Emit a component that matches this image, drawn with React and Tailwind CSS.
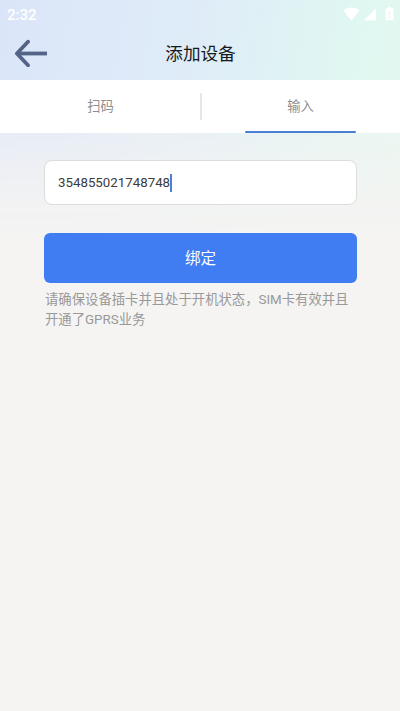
import { useState } from 'react';

const tabs = [
  { id: 'scan', label: '扫码' },
  { id: 'input', label: '输入' },
];

const StatusBar = () => (
  <div className="flex h-7 items-center justify-between pl-[7px] pr-[6px] text-white">
    <span className="pt-px text-[15px] font-medium leading-[26px]">2:32</span>
    <svg width="52" height="16" viewBox="0 0 52 16" fill="currentColor" className="mb-px">
      {/* wifi */}
      <path d="M1.2 4.6C5.8 .6 13 .6 17.6 4.6L9.4 14.4Z" />
      {/* signal */}
      <path d="M34 2.5v12H21.5Z" />
      {/* battery */}
      <path
        fillRule="evenodd"
        d="M43.5 3.2q0-.9.9-.9h1.4V1h3.4v1.3h1.4q.9 0 .9.9v10.2q0 .9-.9.9h-6.2q-.9 0-.9-.9ZM46.8 5.6v3.8h1.4V5.6ZM46.8 10.6v1.3h1.4v-1.3Z"
      />
    </svg>
  </div>
);

const Header = ({ title }) => (
  <div className="grid h-[52px] grid-cols-[48px_1fr_48px] items-center">
    <button className="pb-0.5 pl-[14px]" aria-label="返回">
      <svg width="34" height="28" viewBox="0 0 34 28" fill="none" stroke="#536488" strokeWidth="3.8">
        <path d="M33 14.5H3" />
        <path d="M14 2.7L2.9 14.5l11.1 11.8" strokeLinejoin="round" strokeLinecap="round" />
      </svg>
    </button>
    <h1 className="pl-px text-center text-[17.6px] text-[#15191d]">{title}</h1>
  </div>
);

const App = () => {
  const [activeTab, setActiveTab] = useState('input');

  return (
    <div className="relative isolate min-h-screen bg-[#f5f4f3] font-[Roboto,'Noto_Sans_CJK_SC',sans-serif]">
      {/* Soft colour wash behind the top of the page */}
      <div className="absolute inset-x-0 top-0 -z-10 h-[240px] bg-[linear-gradient(100deg,#dbe5f9_0%,#dfecf8_45%,#e0f6f2_78%,#e2f9ef_100%)] [mask-image:linear-gradient(to_bottom,black_0%,black_33%,rgba(0,0,0,0.5)_57%,rgba(0,0,0,0.15)_80%,transparent_100%)]" />

      <StatusBar />
      <Header title="添加设备" />

      <div className="flex h-[53px] items-center bg-white">
        {tabs.map((tab, i) => (
          <div key={tab.id} className="flex h-full flex-1 items-center">
            {i > 0 && <span className="-mr-0.5 h-[27px] w-0.5 bg-[#e6e6e6]" />}
            <button
              onClick={() => setActiveTab(tab.id)}
              className="flex h-full flex-1 flex-col items-center text-[13.3px] text-[#8e8e8e]"
            >
              <span className="flex flex-1 items-center pl-px pt-[3px]">{tab.label}</span>
              <span
                className={`h-0.5 w-[111px] rounded-full ${
                  activeTab === tab.id ? 'bg-[#4a80d4]' : 'bg-transparent'
                }`}
              />
            </button>
          </div>
        ))}
      </div>

      <div className="pl-11 pr-[43px] pt-[27px]">
        <div className="flex h-[45px] items-center rounded-lg border border-[#dcdcdc] bg-white pl-[13px] text-[13.3px] text-[#3c3c3c]">
          <span className="pt-px">354855021748748</span>
          <span className="-ml-[0.5px] h-[18px] w-0.5 bg-[#4a80d8]" />
        </div>

        <button className="mt-7 h-[50px] w-full rounded-md bg-[#407df3] pt-[3px] text-[15.5px] text-white">
          绑定
        </button>

        <p className="mt-[7px] pl-px text-[13.35px] leading-5 text-[#999]">
          请确保设备插卡并且处于开机状态，SIM卡有效并且开通了GPRS业务
        </p>
      </div>
    </div>
  );
};

export default App;
